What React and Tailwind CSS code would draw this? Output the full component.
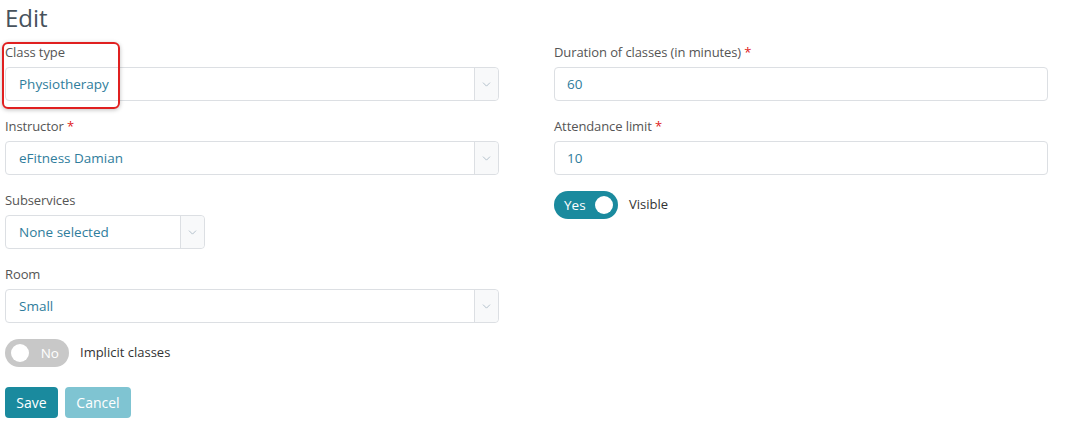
import { ChevronDown } from 'lucide-react'

function Label({ children, required }) {
  return (
    <div className="text-[13px] text-[#555] h-[15px] leading-[15px] mb-[7px] tracking-[-0.1px]">
      {children}
      {required && <span className="text-[#e02020]"> *</span>}
    </div>
  )
}

function Select({ value, className = '' }) {
  return (
    <div className={`flex h-[34px] rounded border border-[#dcdfe3] bg-white ${className}`}>
      <div className="flex-1 flex items-center pl-[13px] text-[13.5px] text-[#2f7d9c]">{value}</div>
      <div className="w-[24px] flex items-center justify-center border-l border-[#dcdfe3] bg-[#f8f9fa] rounded-r">
        <ChevronDown size={13} strokeWidth={1.4} className="text-[#9fb0bd]" />
      </div>
    </div>
  )
}

function Input({ value }) {
  return (
    <div className="flex items-center h-[34px] rounded border border-[#dcdfe3] bg-white pl-[12px] text-[13.5px] text-[#2f7d9c]">
      {value}
    </div>
  )
}

function Toggle({ on, label }) {
  return (
    <div className="flex items-center gap-[11px]">
      {on ? (
        <div className="w-[64px] h-[28px] rounded-full bg-[#1a8a9e] flex items-center justify-between pl-[10px] pr-[5px]">
          <span className="text-[13.5px] text-white">Yes</span>
          <span className="w-[18px] h-[18px] rounded-full bg-white" />
        </div>
      ) : (
        <div className="w-[64px] h-[28px] rounded-full bg-[#c8c8c8] flex items-center justify-between pl-[6px] pr-[10px]">
          <span className="w-[18px] h-[18px] rounded-full bg-white" />
          <span className="text-[13.5px] text-white">No</span>
        </div>
      )}
      <span className="text-[13px] text-[#333]">{label}</span>
    </div>
  )
}

export default function App() {
  return (
    <div className="w-[1070px] h-[428px] bg-white px-[5px] pt-[2px] font-['Open_Sans',sans-serif] relative">
      <h1 className="text-[24px] leading-[32px] text-[#47525c] font-medium h-[38px]">Edit</h1>

      <div className="flex gap-[55px]">
        <div className="w-[494px] flex flex-col">
          <div className="mt-[5px] h-[74px] relative">
            <Label>Class type</Label>
            <Select value="Physiotherapy" />
            <div className="absolute left-[-3px] top-[-3px] w-[118px] h-[67px] rounded-[6px] border-2 border-[#e02020] shadow-[0_1px_4px_rgba(0,0,0,0.25)]" />
          </div>
          <div className="h-[74px]">
            <Label required>Instructor</Label>
            <Select value="eFitness Damian" />
          </div>
          <div className="h-[74px]">
            <Label>Subservices</Label>
            <Select value="None selected" className="w-[200px]" />
          </div>
          <div className="h-[72px]">
            <Label>Room</Label>
            <Select value="Small" />
          </div>
          <Toggle on={false} label="Implicit classes" />
          <div className="flex gap-[7px] mt-[20px]">
            <button className="h-[31px] w-[53px] rounded bg-[#1a8a9e] text-white text-[14px]">Save</button>
            <button className="h-[31px] w-[66px] rounded bg-[#7fc4d2] text-white text-[14px]">Cancel</button>
          </div>
        </div>

        <div className="w-[494px] flex flex-col">
          <div className="mt-[5px] h-[74px]">
            <Label required>Duration of classes (in minutes)</Label>
            <Input value="60" />
          </div>
          <div className="h-[91px]">
            <Label required>Attendance limit</Label>
            <Input value="10" />
            <div className="mt-[16px]">
              <Toggle on label="Visible" />
            </div>
          </div>
        </div>
      </div>
    </div>
  )
}
